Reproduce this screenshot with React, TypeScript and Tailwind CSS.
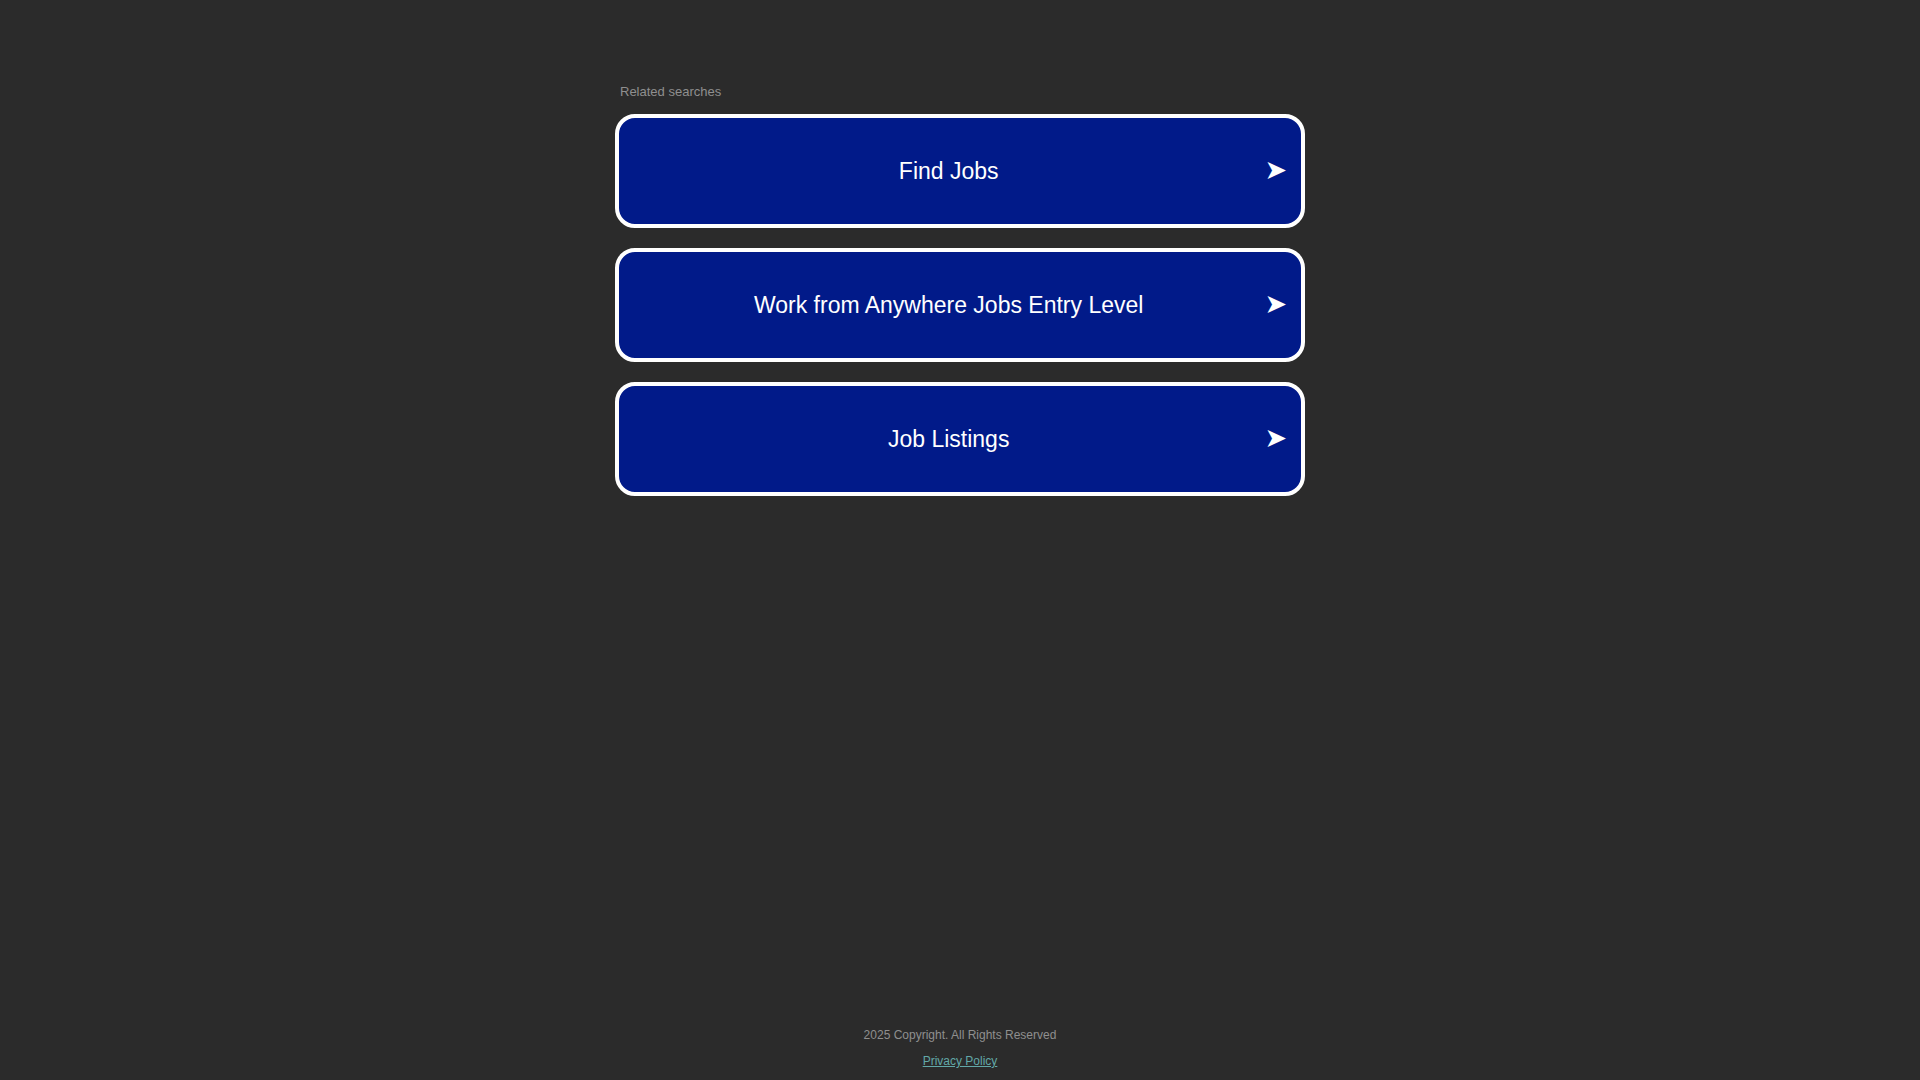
const searches = ['Find Jobs', 'Work from Anywhere Jobs Entry Level', 'Job Listings']

export default function App() {
  return (
    <div className="flex min-h-screen flex-col bg-[#2b2b2b] font-['Liberation_Sans',Arial,sans-serif]">
      <main className="mx-auto w-[690px] pt-[84px]">
        <p className="pl-[5px] text-[13px] leading-[16px] text-[#8f8f8f]">Related searches</p>
        <div className="mt-[14px] flex flex-col gap-[20px]">
          {searches.map((label) => (
            <a
              key={label}
              href="#"
              className="flex h-[114px] items-center rounded-[20px] border-4 border-white bg-[#011a89] pl-[20px] pr-[14px] text-white"
            >
              <span className="flex-1 text-center text-[23px] leading-[28px]">{label}</span>
              <span className="mb-[3px] ml-[6px] font-['DejaVu_Sans',sans-serif] text-[27px] leading-none">➤</span>
            </a>
          ))}
        </div>
      </main>
      <footer className="mt-auto flex flex-col items-center pb-[12px] text-[12px] leading-[14px]">
        <p className="text-[#8f8f8f]">2025 Copyright. All Rights Reserved</p>
        <a href="#" className="mt-[12px] text-[#62a8a8] underline">
          Privacy Policy
        </a>
      </footer>
    </div>
  )
}
